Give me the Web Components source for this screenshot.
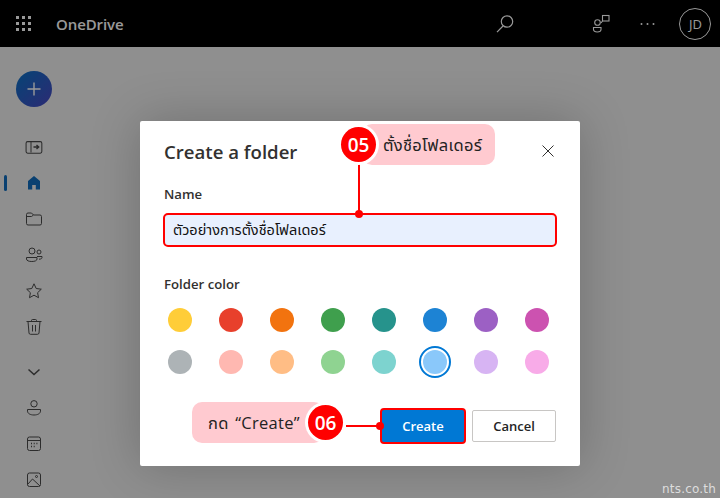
<!DOCTYPE html>
<html lang="th">
<head>
<meta charset="utf-8">
<title>OneDrive</title>
<style>
html, body { margin: 0; height: 100%; }
body { width: 720px; height: 498px; overflow: hidden; position: relative; background: #eee; font-family: "Open Sans", "Noto Sans", "Noto Sans Thai", "DejaVu Sans", sans-serif; }
.shell { display: flex; flex-direction: column; height: 498px; }
.scrim { position: absolute; inset: 0; background: rgba(0,0,0,.4); }
</style>
</head>
<body>
<div class="shell">
  <od-header></od-header>
  <od-rail></od-rail>
</div>
<div class="scrim"></div>
<folder-dialog></folder-dialog>
<step-note num="05" side="left" style="left:341px;top:124px">ตั้งชื่อโฟลเดอร์</step-note>
<step-note num="06" side="right" style="left:192px;top:402px">กด “Create”</step-note>
<site-mark>nts.co.th</site-mark>

<script>
class OdHeader extends HTMLElement {
  connectedCallback() {
    const root = this.attachShadow({ mode: 'open' });
    root.innerHTML = `
<style>
:host { display: flex; align-items: center; height: 47px; background: #000; color: #fff; flex: none; }
svg { display: block; flex: none; }
.title { font-size: 15px; font-weight: 600; margin-left: 24px; letter-spacing: -.1px; }
.search { margin-left: 372px; }
.people { margin-left: 77px; }
.more { margin-left: 28px; }
.avatar { box-sizing: border-box; width: 32px; height: 32px; margin-left: 24px; border: 1px solid #fff; border-radius: 50%; font-size: 13px; display: flex; align-items: center; justify-content: center; }
</style>
<svg width="16" height="16" style="margin-left:16px" fill="#fff">
  <rect x="0" y="0" width="3" height="3"/><rect x="6" y="0" width="3" height="3"/><rect x="12" y="0" width="3" height="3"/>
  <rect x="0" y="6" width="3" height="3"/><rect x="6" y="6" width="3" height="3"/><rect x="12" y="6" width="3" height="3"/>
  <rect x="0" y="12" width="3" height="3"/><rect x="6" y="12" width="3" height="3"/><rect x="12" y="12" width="3" height="3"/>
</svg>
<span class="title">OneDrive</span>
<svg class="search" width="20" height="20" viewBox="0 0 20 20" fill="none" stroke="#fff" stroke-width="1.2"><circle cx="12" cy="7.5" r="5.7"/><path d="M8 12 2 18.2"/></svg>
<svg class="people" width="20" height="20" viewBox="0 0 20 20" fill="none" stroke="#fff" stroke-width="1.1"><rect x="10.5" y="1.5" width="6.5" height="5.5"/><path d="M10.5 7 9 9"/><circle cx="5.5" cy="8.5" r="2.8"/><path d="M1.5 13.5h7.5v2c0 1.5-1.5 2.5-3.8 2.5s-3.7-1-3.7-2.5z"/></svg>
<svg class="more" width="15" height="4" fill="#fff"><circle cx="1.5" cy="2" r="1"/><circle cx="7.500" cy="2" r="1"/><circle cx="13.500" cy="2" r="1"/></svg>
<span class="avatar">JD</span>`;
  }
}
customElements.define('od-header', OdHeader);

// left rail, each icon sits in a 36px row
const railIcons = [
  '<rect x="1.5" y="2.5" width="15" height="11" rx="1.5" transform="translate(-.5 1) scale(1.05)"/><path d="M6 3.5v11"/><path d="M8.5 9h5M11.5 7l2.2 2-2.2 2" stroke-width="1.4"/>',
  '<path fill="currentColor" stroke="none" d="M9 2 3 7v8.5h4.2V11h3.6v4.500H15V7z" stroke-linejoin="round"/>',
  '<path d="M1.500 4.500a1.500 1.500 0 0 1 1.500-1.500h3.500l2 2h6.500a1.500 1.500 0 0 1 1.500 1.500v7a1.500 1.500 0 0 1-1.500 1.500H3a1.500 1.500 0 0 1-1.500-1.500zM1.500 6.500 6.500 6.500 8.500 5"/>',
  '<circle cx="7" cy="5" r="3"/><circle cx="14" cy="6" r="2"/><path d="M1.500 11.500h10.500v1.500c0 1.700-2.300 2.500-5.200 2.500s-5.300-.8-5.300-2.500zM12 10.500h5v1c0 1-1 1.700-3 1.700"/>',
  '<path d="M9 1.800l2.200 4.700 5.100.7-3.700 3.500.9 5-4.500-2.500-4.500 2.500.9-5-3.700-3.500 5.100-.7z" stroke-linejoin="round"/>',
  '<path d="M1.500 3.500h15M6.500 3.500V2.500a1 1 0 0 1 1-1h3a1 1 0 0 1 1 1v1M3 3.500 4 15a1.500 1.500 0 0 0 1.500 1.300h7A1.500 1.500 0 0 0 14 15l1-11.500M7.500 7v6.500M10.500 7v6.500"/>',
  '<path d="M3.500 6.500 9 11.500l5.500-5" stroke-width="1.500"/>',
  '<circle cx="9" cy="4.800" r="3.200"/><path d="M2.500 10.500h13v1.500c0 2.500-2.800 4-6.500 4s-6.500-1.500-6.500-4z"/>',
  '<rect x="2.500" y="2" width="13" height="13.500" rx="2"/><path d="M2.500 5.500h13"/><path d="M6 8.500h1M8.700 8.500h1M11.400 8.500h1M6 11.500h1M8.700 11.500h1" stroke-width="1.500"/>',
  '<rect x="2.500" y="2" width="13" height="13.500" rx="2"/><path d="M2.500 13.500l5-5.500 7.500 7"/><circle cx="11.500" cy="5.500" r="1"/>'
];

class OdRail extends HTMLElement {
  connectedCallback() {
    const root = this.attachShadow({ mode: 'open' });
    const row = (svg, i) => `<div class="row${i === 1 ? ' on' : ''}${i === 6 ? ' gap' : ''}"><svg width="18" height="18" viewBox="0 0 18 18" fill="none" stroke="currentColor" stroke-width="1">${svg}</svg></div>`;
    root.innerHTML = `
<style>
:host { display: flex; flex-direction: column; flex: 1; width: 68px; color: #4a4a4a; }
.add { width: 36px; height: 36px; margin: 24px 0 0 16px; border-radius: 50%; background: linear-gradient(135deg, #0a72c4, #4a47c2); display: flex; align-items: center; justify-content: center; }
.list { margin-top: 22px; }
.row { position: relative; height: 36px; display: flex; align-items: center; justify-content: center; }
.row svg { display: block; }
.on { color: #0f6cbd; }
.on::before { content: ""; position: absolute; left: 4px; top: 10px; width: 3px; height: 16px; border-radius: 2px; background: #0f6cbd; }
.gap { margin-top: 9px; }
</style>
<div class="add"><svg width="16" height="16" fill="none" stroke="#fff" stroke-width="1.4"><path d="M8 1.500v13M1.500 8h13"/></svg></div>
<div class="list">${railIcons.map(row).join('')}</div>`;
  }
}
customElements.define('od-rail', OdRail);

const swatches = ['#ffcd38','#e8402c','#f2730f','#3f9f4d','#26938c','#1d83d4','#9c60c4','#cc52b0',
                  '#adb3b6','#ffb8b1','#ffbd85','#8fd391','#7dd3cf','#8ac8fa','#d7b4f3','#f8abe8'];

class FolderDialog extends HTMLElement {
  connectedCallback() {
    const root = this.attachShadow({ mode: 'open' });
    const dots = swatches.map((c, i) => `<span class="dot${i === 13 ? ' sel' : ''}" style="background:${c}"></span>`).join('');
    root.innerHTML = `
<style>
:host { position: absolute; left: 140px; top: 121px; width: 440px; height: 345px; box-sizing: border-box; padding: 15px 24px 0; background: #fff; border-radius: 2px; box-shadow: 0 0 50px rgba(0,0,0,.22); color: #242424; display: flex; flex-direction: column; }
.top { display: flex; justify-content: space-between; align-items: center; height: 30px; }
h2 { margin: 0; font-size: 18.600px; font-weight: 600; color: #323130; }
.close { margin-right: 1px; display: block; }
label { display: block; font-size: 13.200px; font-weight: 600; line-height: 18px; color: #323130; }
.name { margin-top: 19px; }
.field { box-sizing: border-box; height: 34px; margin: 10px 0 0 -1px; width: 394px; padding: 2px 8px 0; border: 2px solid #f00; border-radius: 5px; background: #e8f0fe; font-size: 14.500px; display: flex; align-items: center; color: #111; }
.color { margin-top: 28px; }
.grid { display: grid; grid-template-columns: repeat(8, 24px); column-gap: 27px; row-gap: 18px; margin: 15px 0 0 4px; }
.dot { width: 24px; height: 24px; border-radius: 50%; position: relative; }
.sel::after { content: ""; position: absolute; inset: -4px; border: 2px solid #0078d4; border-radius: 50%; }
.foot { display: flex; justify-content: flex-end; align-items: center; gap: 6px; margin: 34px 0 0; }
button { font: inherit; font-size: 13px; font-weight: 600; box-sizing: border-box; border-radius: 2px; padding: 0; }
.ok { width: 86px; height: 36px; background: #0078d4; color: #fff; border: 2px solid #f00; border-radius: 4px; }
.no { width: 84px; height: 32px; background: #fff; color: #242424; border: 1px solid #c8c6c4; }
</style>
<div class="top"><h2>Create a folder</h2>
<svg class="close" width="14" height="14" fill="none" stroke="#323130" stroke-width="1"><path d="M1.500 1.500l11 11M12.500 1.500l-11 11"/></svg></div>
<label class="name">Name</label>
<div class="field">ตัวอย่างการตั้งชื่อโฟลเดอร์</div>
<label class="color">Folder color</label>
<div class="grid">${dots}</div>
<div class="foot"><button class="ok">Create</button><button class="no">Cancel</button></div>`;
  }
}
customElements.define('folder-dialog', FolderDialog);

// numbered red callout, lies over the dialog
class StepNote extends HTMLElement {
  connectedCallback() {
    const root = this.attachShadow({ mode: 'open' });
    const num = this.getAttribute('num');
    const side = this.getAttribute('side');
    root.innerHTML = `
<style>
:host { position: absolute; display: flex; align-items: center; height: 41px; color: #222; font-size: 16.500px; word-spacing: 2px; ${side === 'left' ? 'width: 154px;' : 'width: 153px;'} }
.pill { position: absolute; top: 0; height: 41px; background: #ffcad0; border-radius: 10px; display: flex; align-items: center; white-space: nowrap; box-sizing: border-box; letter-spacing: .3px; padding-top: 1px; }
.left  { left: 21px; right: 0; padding-left: 21px; }
.right { left: 0; right: 21px; padding-left: 16px; }
.badge { position: absolute; top: 3px; width: 35px; height: 35px; border-radius: 50%; background: #f00; box-shadow: 0 0 0 3px #fff; color: #fff; font-size: 19px; font-weight: 600; letter-spacing: 0; display: flex; align-items: center; justify-content: center; }
.bl { left: 0; }
.br { right: 2px; }
</style>
<div class="pill ${side}"><slot></slot></div>
<div class="badge ${side === 'left' ? 'bl' : 'br'}">${num}</div>`;
  }
}
customElements.define('step-note', StepNote);

// leader lines from the callouts to their targets
class LeaderLine extends HTMLElement {
  connectedCallback() {
    const root = this.attachShadow({ mode: 'open' });
    root.innerHTML = `
<style>:host { position: absolute; inset: 0; pointer-events: none; display: block; }</style>
<svg width="720" height="498" style="display:block">
  <path d="M359 162V214" stroke="#f00" stroke-width="2"/><circle cx="359" cy="214" r="4" fill="#f00"/>
  <path d="M346 426H380" stroke="#f00" stroke-width="2"/><circle cx="380" cy="426" r="4" fill="#f00"/>
</svg>`;
  }
}
customElements.define('leader-line', LeaderLine);
document.body.insertBefore(document.createElement('leader-line'), document.querySelector('step-note'));

class SiteMark extends HTMLElement {
  connectedCallback() {
    const root = this.attachShadow({ mode: 'open' });
    root.innerHTML = `
<style>:host { position: absolute; right: 4px; bottom: 2px; font: 12px "DejaVu Sans", sans-serif; color: #ddd; letter-spacing: .2px; }</style>
<slot></slot>`;
  }
}
customElements.define('site-mark', SiteMark);
</script>
</body>
</html>
